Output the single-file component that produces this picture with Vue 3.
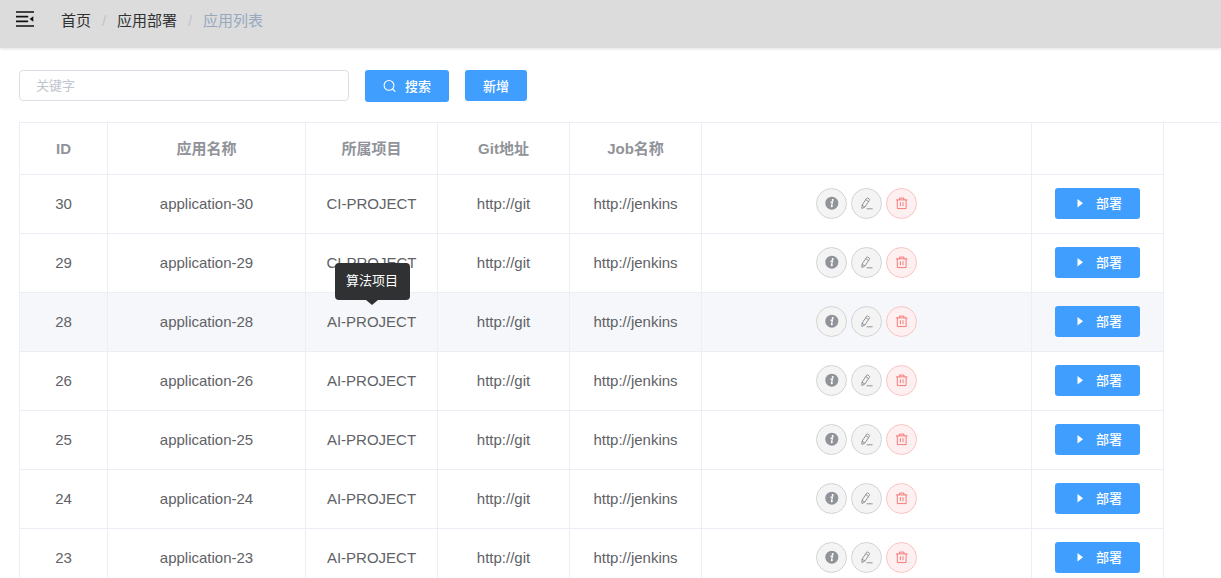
<script setup>
const columns = [
  { label: 'ID', width: 88 },
  { label: '应用名称', width: 198 },
  { label: '所属项目', width: 132 },
  { label: 'Git地址', width: 132 },
  { label: 'Job名称', width: 132 },
  { label: '', width: 330 },
  { label: '', width: 132 },
]
const rows = [
  { id: 30, project: 'CI-PROJECT' },
  { id: 29, project: 'CI-PROJECT' },
  { id: 28, project: 'AI-PROJECT', tip: '算法项目' },
  { id: 26, project: 'AI-PROJECT' },
  { id: 25, project: 'AI-PROJECT' },
  { id: 24, project: 'AI-PROJECT' },
  { id: 23, project: 'AI-PROJECT' },
]
</script>

<template>
  <div class="page">
    <header class="topbar">
      <button class="fold" type="button" aria-label="折叠菜单">
        <svg viewBox="0 0 18 16" width="18" height="16">
          <path d="M.5 1h17M.5 5.7h11M.5 10.3h11M.5 15h17" fill="none" stroke="#111" stroke-width="1.7" stroke-linecap="round" />
          <path d="M17.3 5.2v5.6L13.6 8z" fill="#111" />
        </svg>
      </button>
      <nav class="crumbs">
        <a href="#">首页</a><span class="sep">/</span>
        <a href="#">应用部署</a><span class="sep">/</span>
        <span class="current">应用列表</span>
      </nav>
    </header>

    <main class="content">
      <form class="filters" @submit.prevent>
        <input class="keyword" type="text" placeholder="关键字" aria-label="关键字" />
        <button class="primary search" type="submit">
          <svg viewBox="0 0 14 14" width="14" height="14" fill="none" stroke="#fff" stroke-width="1.1" stroke-linecap="round">
            <circle cx="6" cy="6.4" r="4.9" />
            <path d="M9.6 10L12 12.4" />
          </svg>
          <span>搜索</span>
        </button>
        <button class="primary add" type="button">新增</button>
      </form>

      <div class="grid">
        <table>
          <colgroup>
            <col v-for="(c, i) in columns" :key="i" :style="{ width: c.width + 'px' }" />
          </colgroup>
          <thead>
            <tr>
              <th v-for="(c, i) in columns" :key="i" scope="col">{{ c.label }}</th>
            </tr>
          </thead>
          <tbody>
            <tr v-for="row in rows" :key="row.id" :class="{ hovered: row.tip }">
              <td>{{ row.id }}</td>
              <td>application-{{ row.id }}</td>
              <td>
                <span class="project">
                  {{ row.project }}
                  <span v-if="row.tip" class="tip" role="tooltip">{{ row.tip }}</span>
                </span>
              </td>
              <td>http://git</td>
              <td>http://jenkins</td>
              <td class="controls">
                <div class="actions">
                  <button class="round" type="button" aria-label="详情">
                    <svg viewBox="0 0 14 14" width="14" height="14">
                      <circle cx="6.8" cy="7.2" r="6.5" fill="#909399" />
                      <circle cx="7.7" cy="3.9" r="1" fill="#fff" />
                      <path d="M5.5 6.3L7.5 5.8L6.4 10.4Q6.5 10.9 7.8 9.8" fill="none" stroke="#fff" stroke-width="1.2" />
                    </svg>
                  </button>
                  <button class="round" type="button" aria-label="编辑">
                    <svg viewBox="0 0 14 14" width="14" height="14" fill="none" stroke="#909399" stroke-width="1" stroke-linejoin="round">
                      <path d="M2 9.2L6.6 2.3Q7.2 1.6 7.9 2.1L9.3 3.1Q9.9 3.6 9.4 4.3L4.9 11L1.9 12.5zM5.8 3.6L8.5 5.6M2 9.2L4.9 11M6.6 12.8h6" />
                    </svg>
                  </button>
                  <button class="round danger" type="button" aria-label="删除">
                    <svg viewBox="0 0 14 14" width="14" height="14" fill="none" stroke="#f56c6c" stroke-width=".9">
                      <path d="M1 3.9h11.4M4.4 3.9v-1.8h4.6v1.8M2.3 3.9v8.7h8.8v-8.7M5.4 6.2v4M8 6.2v4" />
                    </svg>
                  </button>
                </div>
              </td>
              <td class="controls">
                <button class="primary deploy" type="button">
                  <svg viewBox="0 0 14 14" width="14" height="14"><path d="M4.5 3v8.4L10 7.2z" fill="#fff" /></svg>
                  <span>部署</span>
                </button>
              </td>
            </tr>
          </tbody>
        </table>
      </div>
    </main>
  </div>
</template>

<style>
body {
  overflow: hidden;
  background: #fff;
}
</style>

<style scoped>
.page {
  height: 100vh;
  overflow: hidden;
  font-family: "Liberation Sans", "Noto Sans CJK SC", sans-serif;
  font-size: 15px;
  color: #606266;
}
button,
input {
  box-sizing: border-box;
  margin: 0;
  font-family: inherit;
  font-size: 13px;
}
svg {
  display: block;
  flex: none;
}
.topbar {
  display: flex;
  align-items: flex-start;
  height: 48px;
  padding: 0 16px;
  box-sizing: border-box;
  background: #dcdcdc;
  box-shadow: 0 1px 3px rgba(0, 0, 0, 0.12);
}
.fold {
  padding: 0;
  margin-top: 11px;
  border: 0;
  background: none;
}
.crumbs {
  display: flex;
  margin-left: 27px;
  line-height: 42px;
}
.crumbs a {
  color: #303133;
  text-decoration: none;
}
.sep {
  width: 4px;
  margin: 0 11px;
  color: #c0c4cc;
}
.current {
  color: #97a8be;
}
.content {
  padding: 22px 0 0 19px;
}
.filters {
  display: flex;
  align-items: flex-start;
  gap: 16px;
  height: 52px;
}
.keyword {
  width: 330px;
  height: 31px;
  padding: 0 16px;
  border: 1px solid #dcdfe6;
  border-radius: 4px;
  background: #fff;
  color: #606266;
  outline: none;
}
.keyword::placeholder {
  color: #c0c4cc;
  opacity: 1;
}
.primary {
  display: flex;
  align-items: center;
  justify-content: center;
  height: 31px;
  padding: 0;
  border: 0;
  border-radius: 3px;
  background: #409eff;
  color: #fff;
  font-weight: 500;
}
.primary span {
  padding-bottom: 2px;
}
.search {
  width: 84px;
  height: 32px;
  gap: 8px;
}
.add {
  width: 62px;
}
.deploy {
  width: 85px;
  margin: 0 auto;
  gap: 9px;
}
.grid {
  border-top: 1px solid #ebeef5;
  border-left: 1px solid #ebeef5;
}
table {
  width: 1144px;
  table-layout: fixed;
  border-collapse: separate;
  border-spacing: 0;
}
th,
td {
  box-sizing: border-box;
  height: 59px;
  padding: 0;
  border-right: 1px solid #ebeef5;
  border-bottom: 1px solid #ebeef5;
  text-align: center;
  line-height: 24px;
}
th {
  height: 52px;
  color: #909399;
  font-weight: 700;
}
.controls {
  padding-bottom: 2px;
}
.hovered td {
  background: #f5f7fa;
}
.project {
  position: relative;
}
.tip {
  position: absolute;
  bottom: 100%;
  left: 50%;
  z-index: 1;
  width: 75px;
  margin: 0 0 13px -37px;
  border-radius: 4px;
  background: #303133;
  color: #fff;
  font-size: 13px;
  line-height: 36px;
  padding-bottom: 1px;
  white-space: nowrap;
}
.tip::after {
  content: "";
  position: absolute;
  top: 100%;
  left: 50%;
  margin-left: -6px;
  border: 6px solid transparent;
  border-top: 5px solid #303133;
  border-bottom: 0;
}
.actions {
  display: flex;
  justify-content: center;
  gap: 4px;
}
.round {
  display: flex;
  align-items: center;
  justify-content: center;
  width: 31px;
  height: 31px;
  padding: 0;
  border: 1px solid #d3d4d6;
  border-radius: 50%;
  background: #f4f4f5;
}
.danger {
  border-color: #fbc4c4;
  background: #fef0f0;
}
</style>
